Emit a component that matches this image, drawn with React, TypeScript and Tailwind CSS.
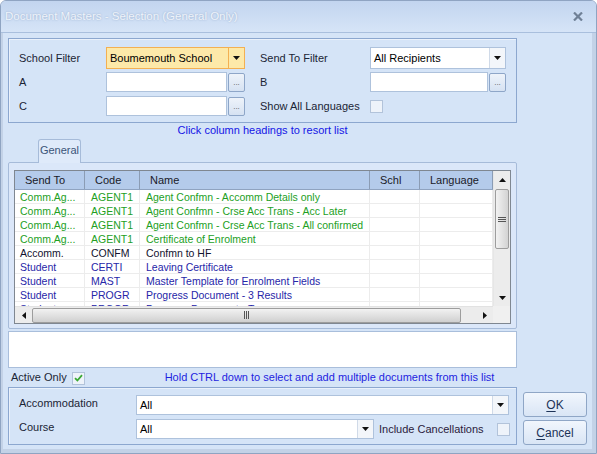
import React from 'react';

type Tone = 'green' | 'dark' | 'blue';

interface DocRow {
  sendTo: string;
  code: string;
  name: string;
  tone: Tone;
}

const rows: DocRow[] = [
  { sendTo: 'Comm.Ag...', code: 'AGENT1', name: 'Agent Confmn - Accomm Details only', tone: 'green' },
  { sendTo: 'Comm.Ag...', code: 'AGENT1', name: 'Agent Confmn - Crse Acc Trans - Acc Later', tone: 'green' },
  { sendTo: 'Comm.Ag...', code: 'AGENT1', name: 'Agent Confmn - Crse Acc Trans - All confirmed', tone: 'green' },
  { sendTo: 'Comm.Ag...', code: 'AGENT1', name: 'Certificate of Enrolment', tone: 'green' },
  { sendTo: 'Accomm.', code: 'CONFM', name: 'Confmn to HF', tone: 'dark' },
  { sendTo: 'Student', code: 'CERTI', name: 'Leaving Certificate', tone: 'blue' },
  { sendTo: 'Student', code: 'MAST', name: 'Master Template for Enrolment Fields', tone: 'blue' },
  { sendTo: 'Student', code: 'PROGR', name: 'Progress Document - 3 Results', tone: 'blue' },
  { sendTo: 'Student', code: 'PROGR', name: 'Progress Document - Term', tone: 'blue' },
];

const toneClass: Record<Tone, string> = {
  green: 'text-[#22a01e]',
  dark: 'text-[#12122e]',
  blue: 'text-[#2626a8]',
};

const columns = [
  { label: 'Send To', w: 'w-[70px]', pad: 'pl-[5px]' },
  { label: 'Code', w: 'w-[55px]', pad: 'pl-[6px]' },
  { label: 'Name', w: 'w-[230px]', pad: 'pl-[6px]' },
  { label: 'Schl', w: 'w-[50px]', pad: 'pl-[6px]' },
  { label: 'Language', w: 'w-[73px]', pad: 'pl-[6px]' },
];

function Arrow({ dir }: { dir: 'down' | 'up' | 'left' | 'right' }) {
  const pts = {
    down: '0,0 7,0 3.5,4',
    up: '0,4 7,4 3.5,0',
    left: '4,0 4,7 0,3.5',
    right: '0,0 0,7 4,3.5',
  }[dir];
  const vertical = dir === 'down' || dir === 'up';
  return (
    <svg width={vertical ? 7 : 4} height={vertical ? 4 : 7} viewBox={vertical ? '0 0 7 4' : '0 0 4 7'}>
      <polygon points={pts} fill="#111" />
    </svg>
  );
}

function Combo({ value, className, highlight }: { value: string; className: string; highlight?: boolean }) {
  return (
    <div
      className={`flex h-[20px] border ${className} ${
        highlight ? 'border-[#f3b052] bg-[#fde9a9]' : 'border-[#aec2dc] bg-white'
      }`}
    >
      <div className="flex flex-1 items-center pl-[3px] text-[11px] text-black">{value}</div>
      <div
        className={`flex w-[16px] items-center justify-center border-l ${
          highlight ? 'border-[#f3b052] bg-[#fde9a9]' : 'border-[#d0dae8] bg-[#f3f6fa]'
        }`}
      >
        <Arrow dir="down" />
      </div>
    </div>
  );
}

function TextBox({ className }: { className: string }) {
  return <div className={`h-[20px] border border-[#aec2dc] bg-white ${className}`} />;
}

function DotsButton() {
  return (
    <div className="flex h-[19px] w-[17px] items-end justify-center rounded-[2px] border border-[#8ea6c8] bg-gradient-to-b from-[#eef3fa] to-[#d6e2f2] pb-[4px] text-[8px] leading-none text-[#555]">
      ...
    </div>
  );
}

function CheckBox({ checked }: { checked?: boolean }) {
  return (
    <div className="flex h-[13px] w-[13px] items-center justify-center border border-[#b2c3da] bg-[#eef3fa]">
      {checked && (
        <svg width="9" height="8" viewBox="0 0 9 8">
          <path d="M1 4.2 L3.4 6.5 L8 1.2" stroke="#3aa934" strokeWidth="1.8" fill="none" />
        </svg>
      )}
    </div>
  );
}

function Grip({ vertical }: { vertical?: boolean }) {
  return vertical ? (
    <svg width="8" height="7" viewBox="0 0 8 7">
      <path d="M0 1.5 H8 M0 3.5 H8 M0 5.5 H8" stroke="#555" strokeWidth="1" />
    </svg>
  ) : (
    <svg width="7" height="8" viewBox="0 0 7 8">
      <path d="M1.5 0 V8 M3.5 0 V8 M5.5 0 V8" stroke="#555" strokeWidth="1" />
    </svg>
  );
}

function DocGrid() {
  return (
    <div className="flex h-[154px] w-[497px] flex-col border border-[#7f8791] bg-white">
      <div className="flex h-[135px]">
        <div className="flex w-[478px] flex-col overflow-hidden">
          <div className="flex h-[19px] shrink-0 border-b border-[#8fa3c0] bg-[#b4cbeb]">
            {columns.map((c) => (
              <div
                key={c.label}
                className={`${c.w} flex shrink-0 items-center border-r border-[#8b9cb4] pl-[10px] text-[11px] text-[#1a1a28]`}
              >
                {c.label}
              </div>
            ))}
          </div>
          {rows.map((r, i) => (
            <div key={i} className={`flex h-[14px] shrink-0 border-b border-[#ececec] ${toneClass[r.tone]}`}>
              {[r.sendTo, r.code, r.name, '', ''].map((v, j) => (
                <div
                  key={j}
                  className={`${columns[j].w} ${columns[j].pad} shrink-0 overflow-hidden whitespace-nowrap border-r border-[#ececec] pt-[1px] text-[10.5px] leading-[12px]`}
                >
                  {v}
                </div>
              ))}
            </div>
          ))}
        </div>
        <div className="flex w-[17px] flex-col border-l border-[#e6e6e6] bg-[#ececec]">
          <div className="flex h-[17px] items-center justify-center">
            <Arrow dir="up" />
          </div>
          <div className="flex-1 px-[1px]">
            <div className="mt-[1px] flex h-[60px] items-center justify-center rounded-[2px] border border-[#9d9d9d] bg-gradient-to-r from-[#f2f2f2] to-[#d3d3d3]">
              <Grip vertical />
            </div>
          </div>
          <div className="flex h-[17px] items-center justify-center">
            <Arrow dir="down" />
          </div>
        </div>
      </div>
      <div className="flex h-[17px] bg-[#ececec]">
        <div className="flex w-[478px] items-center border-t border-[#e2e2e2]">
          <div className="flex h-full w-[17px] items-center justify-center">
            <Arrow dir="left" />
          </div>
          <div className="flex h-[15px] w-[429px] items-center justify-center rounded-[2px] border border-[#9d9d9d] bg-gradient-to-b from-[#f2f2f2] to-[#d0d0d0]">
            <Grip />
          </div>
          <div className="flex-1" />
          <div className="flex h-full w-[17px] items-center justify-center">
            <Arrow dir="right" />
          </div>
        </div>
        <div className="w-[17px] bg-[#f0f0f0]" />
      </div>
    </div>
  );
}

function DialogButton({ first, rest }: { first: string; rest: string }) {
  return (
    <div className="flex h-[25px] w-[64px] items-center justify-center rounded-[3px] border border-[#8fa6c6] bg-gradient-to-b from-[#f1f6fd] to-[#d9e5f5] text-[12px] text-[#1d3358]">
      <span className="underline underline-offset-[2px]">{first}</span>
      {rest}
    </div>
  );
}

export default function App() {
  return (
    <div className="h-[454px] w-[597px] overflow-hidden rounded-t-[6px] border border-[#8fa4c2] bg-[#d5e4f7] font-['Liberation_Sans',Arial,sans-serif] text-[11px] text-[#1b2435]">
      {/* title bar */}
      <div className="flex h-[32px] items-center justify-between border-b border-[#a9bfdd] bg-gradient-to-b from-[#c2d5ef] to-[#d6e4f7] pl-[4px] pr-[13px]">
        <span className="text-[11.5px] text-[#eef3fa] [text-shadow:0_0_2px_#90a7c8]">
          Document Masters - Selection (General Only)
        </span>
        <svg width="10" height="9" viewBox="0 0 10 9">
          <path d="M1 0.5 L9 8.5 M9 0.5 L1 8.5" stroke="#6f8096" strokeWidth="2.2" />
        </svg>
      </div>

      <div className="flex h-[420px] border-b-[4px] border-l-[2px] border-r-[4px] border-[#c3d2e7] pb-[4px] pl-[5px] pr-[5px] pt-[5px]">
        {/* left column */}
        <div className="flex w-[509px] flex-col">
          {/* filter group */}
          <div className="flex h-[85px] flex-col gap-[3px] border border-[#8ca7cf] pl-[10px] pt-[8px] shadow-[inset_1px_1px_0_#eaf1fb]">
            <div className="flex h-[22px] items-center">
              <span className="w-[87px]">School Filter</span>
              <Combo value="Boumemouth School" className="h-[22px] w-[139px]" highlight />
              <span className="ml-[15px] w-[110px]">Send To Filter</span>
              <Combo value="All Recipients" className="h-[22px] w-[136px]" />
            </div>
            <div className="flex h-[20px] items-center">
              <span className="w-[87px]">A</span>
              <TextBox className="w-[121px]" />
              <div className="ml-[1px]">
                <DotsButton />
              </div>
              <span className="ml-[15px] w-[110px]">B</span>
              <TextBox className="w-[118px]" />
              <div className="ml-[1px]">
                <DotsButton />
              </div>
            </div>
            <div className="mt-[1px] flex h-[20px] items-center">
              <span className="w-[87px]">C</span>
              <TextBox className="w-[121px]" />
              <div className="ml-[1px]">
                <DotsButton />
              </div>
              <span className="ml-[15px] w-[110px]">Show All Languages</span>
              <div className="mt-[1px]">
                <CheckBox />
              </div>
            </div>
          </div>

          <div className="flex h-[16px] items-center justify-center pb-[1px] text-[#1414e6]">
            Click column headings to resort list
          </div>

          {/* tab */}
          <div className="relative z-10 -mb-px ml-[30px] flex h-[24px] w-[43px] items-center justify-center rounded-t-[3px] border border-b-0 border-[#a6bbd9] bg-[#dfeafa] pb-[2px] text-[#3b5478]">
            General
          </div>
          <div className="h-[167px] rounded-[2px] border border-[#a6bbd9] bg-[#dbe7f9] pl-[5px] pt-[7px]">
            <DocGrid />
          </div>

          <div className="mt-[2px] h-[37px] border border-[#a9bedb] bg-white" />

          <div className="flex h-[19px] items-center pl-[3px]">
            <span>Active Only</span>
            <div className="ml-[5px] mt-[1px]">
              <CheckBox checked />
            </div>
            <span className="ml-[80px] text-[#1e1ee0]">
              Hold CTRL down to select and add multiple documents from this list
            </span>
          </div>

          {/* bottom group */}
          <div className="flex h-[58px] flex-col gap-[4px] border border-[#8ca7cf] pl-[10px] pt-[7px] shadow-[inset_1px_1px_0_#eaf1fb]">
            <div className="flex h-[20px] items-center">
              <span className="w-[117px] pb-[3px]">Accommodation</span>
              <Combo value="All" className="w-[373px]" />
            </div>
            <div className="flex h-[20px] items-center">
              <span className="w-[117px] pb-[3px]">Course</span>
              <Combo value="All" className="w-[238px]" />
              <span className="ml-[5px] w-[118px] text-[#2b1b3b]">Include Cancellations</span>
              <CheckBox />
            </div>
          </div>
        </div>

        {/* right column */}
        <div className="ml-[6px] flex w-[64px] flex-col justify-end gap-[3px]">
          <DialogButton first="O" rest="K" />
          <DialogButton first="C" rest="ancel" />
        </div>
      </div>
    </div>
  );
}
